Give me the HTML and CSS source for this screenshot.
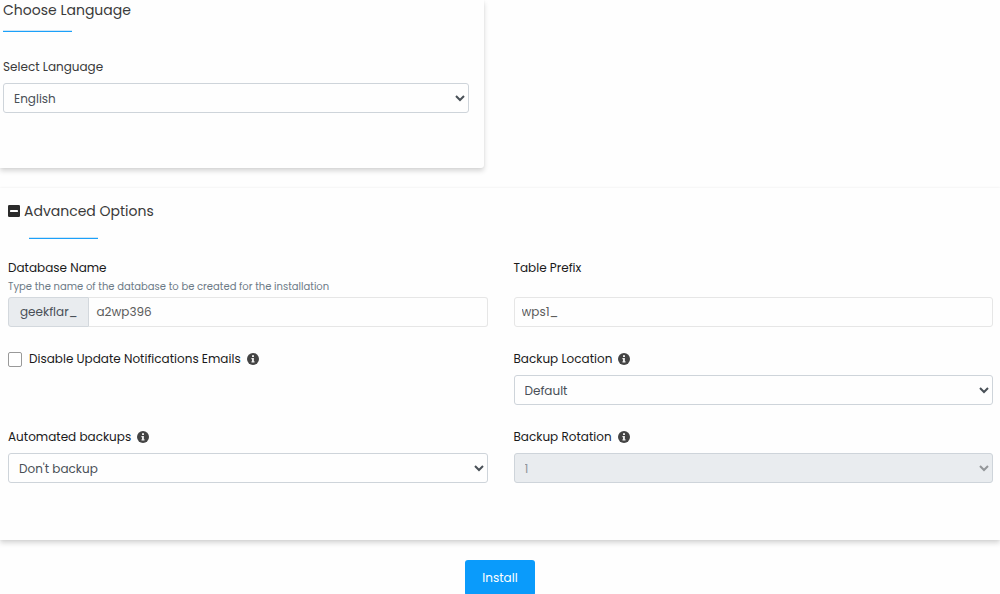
FILE: index.html
```html
<!DOCTYPE html>
<html lang="en">
<head>
<meta charset="utf-8">
<meta name="viewport" content="width=device-width, initial-scale=1">
<title>Install</title>
<link rel="stylesheet" href="styles.css">
</head>
<body>
<svg class="symbols" aria-hidden="true">
  <symbol id="info" viewBox="0 0 12 12">
    <circle cx="6" cy="6" r="6" fill="#444"/>
    <path d="M5 2.3h2v1.8H5zM4.4 5h2.5v3.3h.6v1.2h-3V8.3H5V6.2h-.6z" fill="#eee"/>
  </symbol>
</svg>
<form class="page">
  <section class="card language">
    <h2 class="title">Choose Language</h2>
    <div class="field">
      <label class="label soft" for="lang">Select Language</label>
      <select class="control select" id="lang"><option>English</option></select>
    </div>
  </section>

  <section class="card advanced">
    <h2 class="title inset">
      <svg class="toggle" viewBox="0 0 12 12" aria-hidden="true"><rect width="12" height="12" rx="1.3" fill="#2b2b2b"/><rect x="2" y="5" width="8" height="2" rx=".4" fill="#fff"/></svg>
      Advanced Options
    </h2>
    <div class="grid">
      <div class="field">
        <label class="label" for="db">Database Name</label>
        <small class="help">Type the name of the database to be created for the installation</small>
        <div class="group">
          <span class="prefix">geekflar_</span>
          <input class="control input" id="db" type="text" value="a2wp396">
        </div>
      </div>
      <div class="field spread">
        <label class="label" for="prefix">Table Prefix</label>
        <input class="control input" id="prefix" type="text" value="wps1_">
      </div>
      <div class="field">
        <div class="check-row">
          <input class="check" type="checkbox" id="mails">
          <label class="label" for="mails">Disable Update Notifications Emails</label>
          <svg class="info"><use href="#info"/></svg>
        </div>
      </div>
      <div class="field">
        <div class="label-row"><label class="label" for="loc">Backup Location</label><svg class="info"><use href="#info"/></svg></div>
        <select class="control select" id="loc"><option>Default</option></select>
      </div>
      <div class="field">
        <div class="label-row"><label class="label" for="auto">Automated backups</label><svg class="info"><use href="#info"/></svg></div>
        <select class="control select" id="auto"><option>Don't backup</option></select>
      </div>
      <div class="field">
        <div class="label-row"><label class="label" for="rot">Backup Rotation</label><svg class="info"><use href="#info"/></svg></div>
        <select class="control select" id="rot" disabled><option>1</option></select>
      </div>
    </div>
  </section>

  <div class="actions"><button class="install" type="submit">Install</button></div>
</form>
</body>
</html>
```
FILE: styles.css
```css
* { box-sizing: border-box; }

body {
  margin: 0;
  overflow: hidden;
  background: #fefefe;
  color: #1a1a1a;
  font-family: Poppins, Inter, "Open Sans", sans-serif;
  font-size: 12px;
}

.symbols { display: none; }

.card {
  background: #fefefe;
  box-shadow: 0 3px 5px rgba(0, 0, 0, 0.16), 0 0 2px rgba(0, 0, 0, 0.06);
}

.language {
  width: 48.4%;
  padding: 0 15px 55px 3px;
  border-radius: 0 0 3px 0;
}

.advanced {
  margin-top: 20px;
  padding: 13px 7px 57px 8px;
}

.title {
  display: flex;
  flex-wrap: wrap;
  align-items: center;
  column-gap: 4px;
  margin: 0;
  color: #3a3a3a;
  font-size: 14px;
  font-weight: 400;
  line-height: 20px;
}

.title::after {
  content: "";
  flex: none;
  width: 69px;
  height: 1px;
  margin: 10px calc(100% - 69px) 0 0;
  border-top: 1px solid #cfe6f6;
  background: #1ba1fa;
  background-clip: padding-box;
}

.title.inset::after {
  margin: 16px calc(100% - 90px) 0 21px;
}

.toggle { width: 12px; height: 12px; }

.field {
  display: flex;
  flex-direction: column;
  min-width: 0;
}

.language .field { margin-top: 25px; }

.grid {
  display: grid;
  grid-template-columns: 1fr 1fr;
  gap: 22px 26px;
  margin-top: 19px;
}

.spread { justify-content: space-between; }

.label { line-height: 20px; }

.soft {
  margin-bottom: 6px;
  color: #3a3a3a;
}

.label-row,
.check-row {
  display: flex;
  align-items: center;
  gap: 6px;
}

.label-row { margin-bottom: 6px; }

.info { width: 12px; height: 12px; }

.check {
  appearance: none;
  width: 14px;
  height: 15px;
  margin: 0 1px 0 0;
  border: 1px solid #999;
  border-radius: 2px;
  background: #fff;
}

.check:checked { background: #0a9bfb; }

.help {
  margin-bottom: 1px;
  color: #6c7a86;
  font-size: 10px;
  line-height: 18px;
}

.control {
  width: 100%;
  min-width: 0;
  height: 30px;
  border: 1px solid #ced4da;
  border-radius: 3px;
  background-color: #fefefe;
  color: #495057;
  font: inherit;
}

.select { padding: 0 0 0 6px; }

.select:disabled {
  background-color: #e9ecef;
  color: #939699;
  opacity: 1;
}

.input {
  padding: 0 7px;
  border-color: #e6e6e6;
  color: #5c5c5c;
}

.group { display: flex; }

.group .input {
  border-left: 0;
  border-radius: 0 3px 3px 0;
}

.prefix {
  padding: 0 11px;
  border: 1px solid #d3d8dd;
  border-radius: 3px 0 0 3px;
  background: #e9ecef;
  color: #495057;
  line-height: 28px;
}

.actions {
  display: flex;
  justify-content: center;
  padding-top: 20px;
}

.install {
  height: 36px;
  padding: 0 17px;
  border: 0;
  border-radius: 3px;
  background: #0a9bfb;
  color: #fff;
  font: inherit;
}
```
